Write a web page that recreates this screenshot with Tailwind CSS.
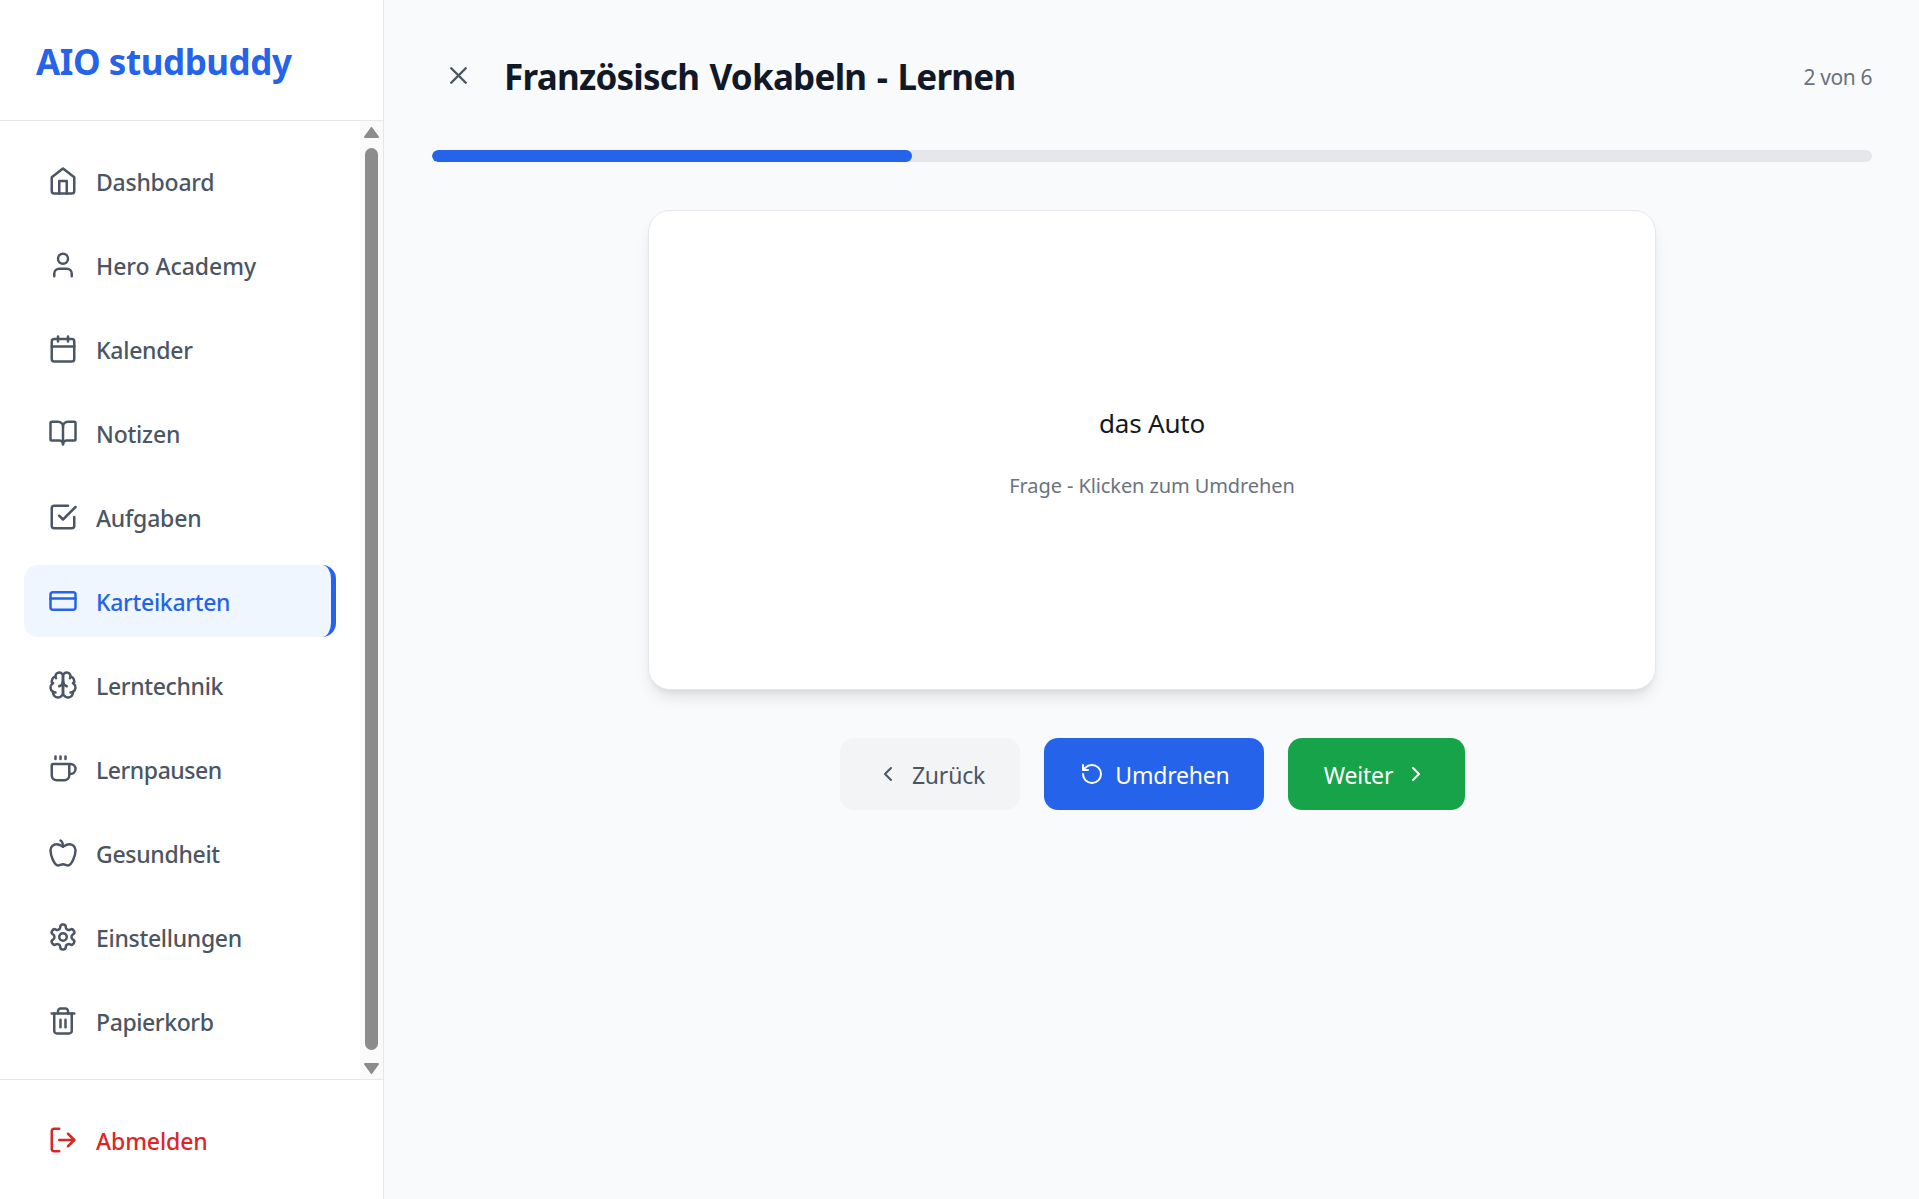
<!DOCTYPE html>
<html lang="de">
<head>
    <meta charset="UTF-8">
    <meta name="viewport" content="width=device-width, initial-scale=1.0">
    <title>AIO studbuddy</title>
    <script src="https://cdn.jsdelivr.net/npm/@tailwindcss/browser@4"></script>
</head>
<body class="bg-[#f9fafb] font-['Noto_Sans',sans-serif] overflow-hidden">
<div class="flex h-[1199px] w-[1919px]">

    <!-- Sidebar -->
    <aside class="flex w-[384px] shrink-0 flex-col border-r border-[#e5e7eb] bg-white">
        <div class="flex h-[121px] shrink-0 items-center border-b border-[#e5e7eb] pl-[36px] pt-[3px]">
            <h1 class="text-[35px] leading-none font-bold tracking-[-0.45px] text-[#2563eb]">AIO studbuddy</h1>
        </div>

        <div class="flex min-h-0 flex-1">
            <nav class="flex flex-1 flex-col gap-[12px] pt-[24px] pl-[24px] pr-[24px]">
                <a class="flex h-[72px] items-center gap-[18px] rounded-[14px] pl-[24px] text-[23px] font-medium tracking-[-0.25px] text-[#4b5563]">
                    <svg class="size-[30px] shrink-0" viewBox="0 0 24 24" fill="none" stroke="currentColor" stroke-width="2" stroke-linecap="round" stroke-linejoin="round"><path d="m3 9 9-7 9 7v11a2 2 0 0 1-2 2H5a2 2 0 0 1-2-2z"/><polyline points="9 22 9 12 15 12 15 22"/></svg>
                    <span class="pt-[2px]">Dashboard</span>
                </a>
                <a class="flex h-[72px] items-center gap-[18px] rounded-[14px] pl-[24px] text-[23px] font-medium tracking-[-0.05px] text-[#4b5563]">
                    <svg class="size-[30px] shrink-0" viewBox="0 0 24 24" fill="none" stroke="currentColor" stroke-width="2" stroke-linecap="round" stroke-linejoin="round"><path d="M19 21v-2a4 4 0 0 0-4-4H9a4 4 0 0 0-4 4v2"/><circle cx="12" cy="7" r="4"/></svg>
                    <span class="pt-[2px]">Hero Academy</span>
                </a>
                <a class="flex h-[72px] items-center gap-[18px] rounded-[14px] pl-[24px] text-[23px] font-medium tracking-[-0.25px] text-[#4b5563]">
                    <svg class="size-[30px] shrink-0" viewBox="0 0 24 24" fill="none" stroke="currentColor" stroke-width="2" stroke-linecap="round" stroke-linejoin="round"><path d="M8 2v4"/><path d="M16 2v4"/><rect width="18" height="18" x="3" y="4" rx="2"/><path d="M3 10h18"/></svg>
                    <span class="pt-[2px]">Kalender</span>
                </a>
                <a class="flex h-[72px] items-center gap-[18px] rounded-[14px] pl-[24px] text-[23px] font-medium tracking-[-0.2px] text-[#4b5563]">
                    <svg class="size-[30px] shrink-0" viewBox="0 0 24 24" fill="none" stroke="currentColor" stroke-width="2" stroke-linecap="round" stroke-linejoin="round"><path d="M12 7v14"/><path d="M3 18a1 1 0 0 1-1-1V4a1 1 0 0 1 1-1h5a4 4 0 0 1 4 4 4 4 0 0 1 4-4h5a1 1 0 0 1 1 1v13a1 1 0 0 1-1 1h-6a3 3 0 0 0-3 3 3 3 0 0 0-3-3z"/></svg>
                    <span class="pt-[2px]">Notizen</span>
                </a>
                <a class="flex h-[72px] items-center gap-[18px] rounded-[14px] pl-[24px] text-[23px] font-medium tracking-[-0.2px] text-[#4b5563]">
                    <svg class="size-[30px] shrink-0" viewBox="0 0 24 24" fill="none" stroke="currentColor" stroke-width="2" stroke-linecap="round" stroke-linejoin="round"><path d="m9 11 3 3L22 4"/><path d="M21 12v7a2 2 0 0 1-2 2H5a2 2 0 0 1-2-2V5a2 2 0 0 1 2-2h11"/></svg>
                    <span class="pt-[2px]">Aufgaben</span>
                </a>
                <a class="flex h-[72px] items-center gap-[18px] rounded-[14px] border-r-[5px] border-[#2563eb] bg-[#eff6ff] pl-[24px] text-[23px] font-medium tracking-[-0.3px] text-[#2563eb]">
                    <svg class="size-[30px] shrink-0" viewBox="0 0 24 24" fill="none" stroke="currentColor" stroke-width="2" stroke-linecap="round" stroke-linejoin="round"><rect width="20" height="14" x="2" y="5" rx="2"/><line x1="2" x2="22" y1="10" y2="10"/></svg>
                    <span class="pt-[2px]">Karteikarten</span>
                </a>
                <a class="flex h-[72px] items-center gap-[18px] rounded-[14px] pl-[24px] text-[23px] font-medium tracking-[-0.35px] text-[#4b5563]">
                    <svg class="size-[30px] shrink-0" viewBox="0 0 24 24" fill="none" stroke="currentColor" stroke-width="2" stroke-linecap="round" stroke-linejoin="round"><path d="M12 5a3 3 0 1 0-5.997.125 4 4 0 0 0-2.526 5.77 4 4 0 0 0 .556 6.588A4 4 0 1 0 12 18Z"/><path d="M12 5a3 3 0 1 1 5.997.125 4 4 0 0 1 2.526 5.77 4 4 0 0 1-.556 6.588A4 4 0 1 1 12 18Z"/><path d="M15 13a4.5 4.5 0 0 1-3-4 4.5 4.5 0 0 1-3 4"/><path d="M17.599 6.5a3 3 0 0 0 .399-1.375"/><path d="M6.003 5.125A3 3 0 0 0 6.401 6.5"/><path d="M3.477 10.896a4 4 0 0 1 .585-.396"/><path d="M19.938 10.5a4 4 0 0 1 .585.396"/><path d="M6 18a4 4 0 0 1-1.967-.516"/><path d="M19.967 17.484A4 4 0 0 1 18 18"/></svg>
                    <span class="pt-[2px]">Lerntechnik</span>
                </a>
                <a class="flex h-[72px] items-center gap-[18px] rounded-[14px] pl-[24px] text-[23px] font-medium tracking-[-0.45px] text-[#4b5563]">
                    <svg class="size-[30px] shrink-0" viewBox="0 0 24 24" fill="none" stroke="currentColor" stroke-width="2" stroke-linecap="round" stroke-linejoin="round"><path d="M10 2v2"/><path d="M14 2v2"/><path d="M16 8a1 1 0 0 1 1 1v8a4 4 0 0 1-4 4H7a4 4 0 0 1-4-4V9a1 1 0 0 1 1-1h14a4 4 0 1 1 0 8h-1"/><path d="M6 2v2"/></svg>
                    <span class="pt-[2px]">Lernpausen</span>
                </a>
                <a class="flex h-[72px] items-center gap-[18px] rounded-[14px] pl-[24px] text-[23px] font-medium tracking-[-0.3px] text-[#4b5563]">
                    <svg class="size-[30px] shrink-0" viewBox="0 0 24 24" fill="none" stroke="currentColor" stroke-width="2" stroke-linecap="round" stroke-linejoin="round"><path d="M12 20.94c1.5 0 2.75 1.06 4 1.06 3 0 6-8 6-12.22A4.91 4.91 0 0 0 17 5c-2.22 0-4 1.44-5 2-1-.56-2.78-2-5-2a4.9 4.9 0 0 0-5 4.78C2 14 5 22 8 22c1.25 0 2.5-1.06 4-1.06Z"/><path d="M10 2c1 .5 2 2 2 5"/></svg>
                    <span class="pt-[2px]">Gesundheit</span>
                </a>
                <a class="flex h-[72px] items-center gap-[18px] rounded-[14px] pl-[24px] text-[23px] font-medium tracking-[-0.3px] text-[#4b5563]">
                    <svg class="size-[30px] shrink-0" viewBox="0 0 24 24" fill="none" stroke="currentColor" stroke-width="2" stroke-linecap="round" stroke-linejoin="round"><path d="M12.22 2h-.44a2 2 0 0 0-2 2v.18a2 2 0 0 1-1 1.73l-.43.25a2 2 0 0 1-2 0l-.15-.08a2 2 0 0 0-2.73.73l-.22.38a2 2 0 0 0 .73 2.73l.15.1a2 2 0 0 1 1 1.72v.51a2 2 0 0 1-1 1.74l-.15.09a2 2 0 0 0-.73 2.73l.22.38a2 2 0 0 0 2.73.73l.15-.08a2 2 0 0 1 2 0l.43.25a2 2 0 0 1 1 1.73V20a2 2 0 0 0 2 2h.44a2 2 0 0 0 2-2v-.18a2 2 0 0 1 1-1.73l.43-.25a2 2 0 0 1 2 0l.15.08a2 2 0 0 0 2.73-.73l.22-.39a2 2 0 0 0-.73-2.73l-.15-.08a2 2 0 0 1-1-1.74v-.5a2 2 0 0 1 1-1.74l.15-.09a2 2 0 0 0 .73-2.73l-.22-.38a2 2 0 0 0-2.73-.73l-.15.08a2 2 0 0 1-2 0l-.43-.25a2 2 0 0 1-1-1.73V4a2 2 0 0 0-2-2z"/><circle cx="12" cy="12" r="3"/></svg>
                    <span class="pt-[2px]">Einstellungen</span>
                </a>
                <a class="flex h-[72px] items-center gap-[18px] rounded-[14px] pl-[24px] text-[23px] font-medium tracking-[-0.4px] text-[#4b5563]">
                    <svg class="size-[30px] shrink-0" viewBox="0 0 24 24" fill="none" stroke="currentColor" stroke-width="2" stroke-linecap="round" stroke-linejoin="round"><path d="M3 6h18"/><path d="M19 6v14c0 1-1 2-2 2H7c-1 0-2-1-2-2V6"/><path d="M8 6V4c0-1 1-2 2-2h4c1 0 2 1 2 2v2"/><line x1="10" x2="10" y1="11" y2="17"/><line x1="14" x2="14" y1="11" y2="17"/></svg>
                    <span class="pt-[2px]">Papierkorb</span>
                </a>
            </nav>

            <!-- scrollbar -->
            <div class="flex w-[23px] shrink-0 flex-col items-center bg-[#fafafa] pt-[6px]">
                <svg class="h-[11px] w-[15px] shrink-0" viewBox="0 0 15 11"><path d="M7.5 1 14 10H1z" fill="#8c8c8c" stroke="#8c8c8c" stroke-width="2" stroke-linejoin="round"/></svg>
                <div class="mt-[10px] h-[902px] w-[13px] shrink-0 rounded-full bg-[#8c8c8c]"></div>
                <svg class="mt-[13px] h-[11px] w-[15px] shrink-0" viewBox="0 0 15 11"><path d="M1 1h13L7.5 10z" fill="#8c8c8c" stroke="#8c8c8c" stroke-width="2" stroke-linejoin="round"/></svg>
            </div>
        </div>

        <div class="h-[120px] shrink-0 border-t border-[#e5e7eb] p-[24px]">
            <a class="flex h-[72px] items-center gap-[18px] pl-[24px] text-[23px] font-medium tracking-[-0.1px] text-[#dc2626]">
                <svg class="size-[30px] shrink-0" viewBox="0 0 24 24" fill="none" stroke="currentColor" stroke-width="2" stroke-linecap="round" stroke-linejoin="round"><path d="M9 21H5a2 2 0 0 1-2-2V5a2 2 0 0 1 2-2h4"/><polyline points="16 17 21 12 16 7"/><line x1="21" x2="9" y1="12" y2="12"/></svg>
                <span class="pt-[2px]">Abmelden</span>
            </a>
        </div>
    </aside>

    <!-- Main -->
    <main class="flex-1 pl-[48px] pr-[47px] pt-[48px]">
        <div class="flex h-[54px] items-center justify-between">
            <div class="flex items-center gap-[19px]">
                <button class="p-[12px] text-[#4b5563]">
                    <svg class="size-[29px]" viewBox="0 0 24 24" fill="none" stroke="currentColor" stroke-width="2" stroke-linecap="round" stroke-linejoin="round"><path d="M18 6 6 18"/><path d="m6 6 12 12"/></svg>
                </button>
                <h2 class="mt-[5px] text-[35px] font-bold tracking-[-0.75px] [word-spacing:2px] text-[#111827]">Französisch Vokabeln - Lernen</h2>
            </div>
            <span class="mt-[5px] text-[21px] tracking-[-0.4px] text-[#6b7280]">2 von 6</span>
        </div>

        <div class="mt-[48px] h-[12px] overflow-hidden rounded-full bg-[#e5e7eb]">
            <div class="h-full rounded-full bg-[#2563eb]" style="width:33.33%"></div>
        </div>

        <div class="mx-auto mt-[48px] flex h-[480px] w-[1008px] flex-col items-center justify-center rounded-[22px] border border-[#e5e7eb] bg-white pt-[5px] shadow-lg">
            <p class="text-[26px] tracking-[-0.2px] text-[#111827]">das Auto</p>
            <p class="mt-[28px] text-[20px] tracking-[-0.1px] text-[#6b7280]">Frage - Klicken zum Umdrehen</p>
        </div>

        <div class="mt-[48px] flex justify-center gap-[24px]">
            <button class="flex h-[72px] w-[180px] items-center justify-center gap-[12px] rounded-[14px] bg-[#f3f4f6] pl-[2px] text-[23px] tracking-[-0.2px] text-[#4b5563]">
                <svg class="size-[24px]" viewBox="0 0 24 24" fill="none" stroke="currentColor" stroke-width="2" stroke-linecap="round" stroke-linejoin="round"><path d="m15 18-6-6 6-6"/></svg>
                <span class="pt-[2px]">Zurück</span>
            </button>
            <button class="flex h-[72px] w-[220px] items-center justify-center gap-[11px] rounded-[14px] bg-[#2563eb] pl-[3px] text-[23px] tracking-[-0.2px] text-white">
                <svg class="size-[24px]" viewBox="0 0 24 24" fill="none" stroke="currentColor" stroke-width="2" stroke-linecap="round" stroke-linejoin="round"><path d="M3 12a9 9 0 1 0 9-9 9.75 9.75 0 0 0-6.74 2.74L3 8"/><path d="M3 3v5h5"/></svg>
                <span class="pt-[2px]">Umdrehen</span>
            </button>
            <button class="flex h-[72px] w-[177px] items-center justify-center gap-[11px] rounded-[14px] bg-[#16a34a] text-[23px] tracking-[-0.2px] text-white">
                <span class="pt-[2px]">Weiter</span>
                <svg class="size-[24px]" viewBox="0 0 24 24" fill="none" stroke="currentColor" stroke-width="2" stroke-linecap="round" stroke-linejoin="round"><path d="m9 18 6-6-6-6"/></svg>
            </button>
        </div>
    </main>
</div>
</body>
</html>
